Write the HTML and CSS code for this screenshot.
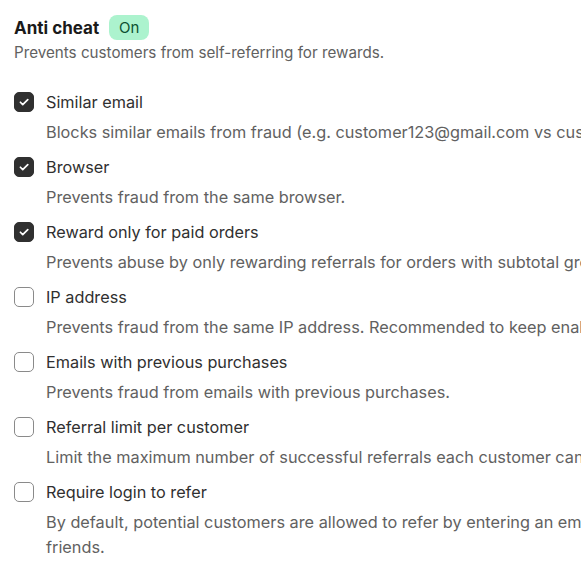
FILE: index.html
```html
<!DOCTYPE html>
<html lang="en">
<head>
  <meta charset="UTF-8">
  <meta name="viewport" content="width=device-width, initial-scale=1.0">
  <title>Anti cheat</title>
  <link rel="stylesheet" href="styles.css">
</head>
<body>
  <div class="settings-card">
    <div class="section-header">
      <h2 class="section-title">Anti cheat</h2>
      <span class="status-badge">On</span>
    </div>
    <p class="section-subtitle">Prevents customers from self-referring for rewards.</p>

    <ul class="option-list">
      <li class="option">
        <label class="option-row">
          <input type="checkbox" class="option-check" checked>
          <span class="option-label">Similar email</span>
        </label>
        <p class="option-help">Blocks similar emails from fraud (e.g. customer123@gmail.com vs customer124@gmail.com).</p>
      </li>
      <li class="option">
        <label class="option-row">
          <input type="checkbox" class="option-check" checked>
          <span class="option-label">Browser</span>
        </label>
        <p class="option-help">Prevents fraud from the same browser.</p>
      </li>
      <li class="option">
        <label class="option-row">
          <input type="checkbox" class="option-check" checked>
          <span class="option-label">Reward only for paid orders</span>
        </label>
        <p class="option-help">Prevents abuse by only rewarding referrals for orders with subtotal greater than 0.</p>
      </li>
      <li class="option">
        <label class="option-row">
          <input type="checkbox" class="option-check">
          <span class="option-label">IP address</span>
        </label>
        <p class="option-help">Prevents fraud from the same IP address. Recommended to keep enabled.</p>
      </li>
      <li class="option">
        <label class="option-row">
          <input type="checkbox" class="option-check">
          <span class="option-label">Emails with previous purchases</span>
        </label>
        <p class="option-help">Prevents fraud from emails with previous purchases.</p>
      </li>
      <li class="option">
        <label class="option-row">
          <input type="checkbox" class="option-check">
          <span class="option-label">Referral limit per customer</span>
        </label>
        <p class="option-help">Limit the maximum number of successful referrals each customer can make.</p>
      </li>
      <li class="option">
        <label class="option-row">
          <input type="checkbox" class="option-check">
          <span class="option-label">Require login to refer</span>
        </label>
        <p class="option-help">By default, potential customers are allowed to refer by entering an email address to share with friends.</p>
      </li>
    </ul>
  </div>
</body>
</html>
```

FILE: styles.css
```css
html, body {
  margin: 0;
  padding: 0;
  background-color: #fff;
  overflow: hidden;
}

body {
  font-family: Inter, "Noto Sans", Arial, sans-serif;
  color: #1f1f1f;
}

.settings-card {
  width: 800px;
  padding: 15px 14px 20px 14px;
}

.section-header {
  display: flex;
  align-items: center;
  gap: 10px;
}

.section-title {
  margin: 0;
  font-size: 17px;
  font-weight: 700;
  color: #1a1a1a;
}

.status-badge {
  display: inline-block;
  padding: 3px 10px;
  border-radius: 8px;
  background-color: #acf3ce;
  color: #0c5132;
  font-size: 15px;
  line-height: 19px;
}

.section-subtitle {
  margin: 2px 0 0 0;
  font-size: 15.2px;
  line-height: 22px;
  color: #616161;
}

.option-list {
  list-style: none;
  margin: 28px 0 0 0;
  padding: 0;
}

.option {
  margin-bottom: 12px;
}

.option-row {
  display: flex;
  align-items: center;
  gap: 12px;
  cursor: pointer;
}

.option-check {
  appearance: none;
  -webkit-appearance: none;
  width: 20px;
  height: 20px;
  margin: 0;
  border: 1px solid #8a8a8a;
  border-radius: 5px;
  background-color: #fff;
  flex-shrink: 0;
}

.option-check:checked {
  border-color: #303030;
  background-color: #303030;
  background-image: url("data:image/svg+xml,%3Csvg xmlns='http://www.w3.org/2000/svg' viewBox='0 0 20 20'%3E%3Cpath d='M6 10.3l2.6 2.6L14.2 7.3' fill='none' stroke='white' stroke-width='1.9' stroke-linecap='round' stroke-linejoin='round'/%3E%3C/svg%3E");
  background-size: 100% 100%;
}

.option-label {
  font-size: 16.25px;
  line-height: 20px;
  color: #303030;
}

.option-help {
  margin: 8px 0 0 32px;
  font-size: 16.3px;
  line-height: 25px;
  color: #616161;
}
```
